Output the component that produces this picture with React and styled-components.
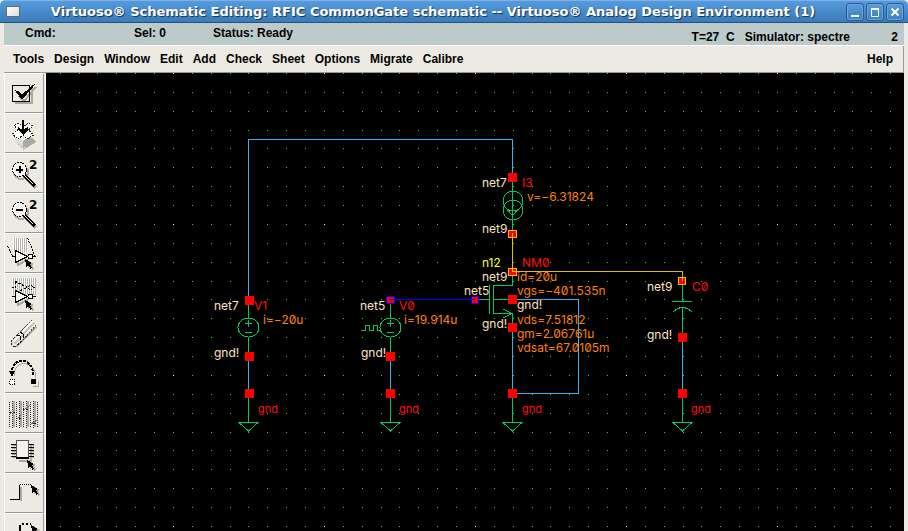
import React from "react";
import styled, { createGlobalStyle } from "styled-components";

const GlobalStyle = createGlobalStyle`
  * { box-sizing: border-box; }
  body { margin: 0; background: #edeae3; overflow: hidden; }
`;

const Window = styled.div`
  display: flex;
  flex-direction: column;
  height: 100vh;
  overflow: hidden;
  background: #edeae3;
  color: #000;
  font: bold 12px/16px "Liberation Sans", Arial, sans-serif;
`;

const TitleBar = styled.header`
  display: flex;
  align-items: center;
  flex: none;
  height: 23px;
  padding: 0 4px 0 6px;
  border-top: 1px solid #7db1e6;
  border-bottom: 1px solid #23507f;
  border-radius: 5px 5px 0 0;
  background: linear-gradient(#569bdd, #4387c7 60%, #3b7cba);
`;

const WindowMenu = styled.button`
  width: 14px;
  height: 11px;
  padding: 0;
  border: 1px solid #6d6a62;
  background: linear-gradient(135deg, #fff, #dcdcdc);
`;

const Title = styled.h1`
  flex: 1;
  margin: 0;
  overflow: hidden;
  color: #fff;
  font: bold 13px/20px "DejaVu Sans", sans-serif;
  text-align: center;
  text-shadow: 1px 1px 1px #1a3150;
  white-space: nowrap;
`;

const WindowControls = styled.div`
  display: flex;
  gap: 2px;
`;

const ControlButton = styled.button`
  display: flex;
  width: 18px;
  height: 18px;
  padding: 0;
  border: 1px solid #28598f;
  border-radius: 3px;
  background: linear-gradient(#5a9bdb, #3e80be);
  box-shadow: inset 0 0 0 1px #6ba5dd;
`;

const Frame = styled.div`
  display: flex;
  flex: 1;
  flex-direction: column;
  min-height: 0;
  padding: 0 4px;
`;

const StatusBar = styled.div`
  display: flex;
  flex: none;
  height: 23px;
  padding: 2px 6px 0 21px;
  border-bottom: 1px solid #fff;
  background: #bccaca;
`;

const StatusItem = styled.span`
  width: ${(p) => p.$width || "auto"};
  white-space: pre;
`;

const SimulatorInfo = styled.div`
  display: flex;
  gap: 10px;
  margin-left: auto;
  padding-top: 4px;
`;

const SessionNumber = styled.span`
  width: 38px;
  text-align: right;
`;

const MenuBar = styled.nav`
  display: flex;
  flex: none;
  align-items: center;
  gap: 10px;
  height: 27px;
  padding: 0 10px 0 9px;
  border-right: 1px solid #999;
  border-bottom: 1px solid #999;
`;

const MenuButton = styled.button`
  margin-left: ${(p) => (p.$end ? "auto" : "0")};
  padding: 0;
  border: 0;
  background: none;
  color: inherit;
  font: inherit;
`;

const Workspace = styled.main`
  display: flex;
  flex: 1;
  min-height: 0;
`;

const Toolbar = styled.div`
  display: flex;
  flex: none;
  flex-direction: column;
  width: 42px;
  padding-right: 1px;
  border-left: 1px solid #fff;
  border-right: 1px solid #fff;
  overflow: hidden;
`;

const ToolButton = styled.button`
  flex: none;
  height: 40px;
  padding: 0;
  border: 0;
  border-top: 1px solid #fff;
  border-bottom: 1px solid #999;
  border-right: 1px solid #999;
  background: #edeae3;

  svg { display: block; }
`;

const Canvas = styled.svg`
  display: block;
  flex: 1;
  min-width: 0;
  height: 100%;
  background: #000;
`;

const colors = {
  net: "#ffe4c0",
  value: "#ff8000",
  name: "#ff1010",
  node: "#ffff20",
};

const Label = styled.text`
  fill: ${(p) => colors[p.$kind]};
  font: 400 ${(p) => (p.$small ? 11 : 12)}px Inter, "DejaVu Sans", sans-serif;
  font-feature-settings: "zero";
`;

const SymbolLines = styled.g`
  fill: none;
  stroke: ${(p) => p.$color};
  stroke-width: 1;
`;

const shadow = "#aaa8a2";

function Cursor({ x, y }) {
  const d = "M0 0 L7 4 L4.5 5 L7 8.500 L5.500 9.500 L3 6 L1.500 8 Z";
  return (
    <g transform={`translate(${x} ${y})`}>
      <path d={d} fill={shadow} transform="translate(2 1)" />
      <path d={d} />
    </g>
  );
}

function Magnifier({ plus }) {
  return (
    <>
      <circle cx="16" cy="18" r="7" fill="none" stroke={shadow} strokeWidth="2" />
      <path d="M21 24 L31 34" stroke={shadow} strokeWidth="4" />
      <circle cx="14.500" cy="15.500" r="7" fill="#f5f3ef" stroke="#000" strokeDasharray="2 1" />
      <path d="M19.500 21.500 L30 32" stroke="#000" strokeWidth="3" />
      <path d="M19.500 21.500 L28.500 30.500" stroke="#eee" strokeWidth="1" />
      <path d={plus ? "M11 15.500 H18 M14.500 12 V19" : "M11 15.500 H18"} stroke="#000" strokeWidth="2" />
      <text x="24" y="15" fontFamily="DejaVu Sans" fontWeight="bold" fontSize="12">2</text>
    </>
  );
}

const stretchLines = (from, to, top, bottom) => {
  let d = "";
  for (let x = from; x <= to; x += 2) d += `M${x + 0.5} ${top}V${bottom}`;
  return d;
};

const pinRows = [10, 13, 16, 19, 22];

const tools = [
  ["Check and save", (
    <>
      <path d="M10 29 H27 V14 M14 22 L19 27 L31 13" fill="none" stroke={shadow} strokeWidth="2" />
      <path d="M7.500 11.500 H24.500 V27.500 H7.500 Z" fill="none" stroke="#000" />
      <path d="M11 17 L14 18 L17 21 L30 10 L17 25 Z" stroke="#000" />
    </>
  )],
  ["Save", (
    <>
      <path d="M18 36 L31 28 L27 23 Z" fill={shadow} />
      <path d="M10 22 L18 27 L26 22 V28 L18 34 L10 28 Z" fill="#aaa8a2" />
      <path d="M10 22 L18 27 V33 L10 28 Z" fill="#ddd" />
      <path d="M9.500 11.500 L14 9 L18 13 L23 9 L28 12 L23.500 16 L28.500 21 L22 25 L18 21 L13 25 L7.500 20 L12.500 16 Z" fill="#fff" stroke="#222" strokeDasharray="2 1" />
      <path d="M18 6 V17" stroke="#000" strokeWidth="2" />
      <path d="M13 13 L18 16 L23 13 V16 L18 21 L13 16 Z" />
    </>
  )],
  ["Zoom in by 2", <Magnifier plus />],
  ["Zoom out by 2", <Magnifier />],
  ["Stretch", (
    <>
      <path d={stretchLines(8, 22, 4, 18)} stroke="#fff" />
      <path d={stretchLines(9, 22, 4, 18)} stroke="#b4b2ad" />
      <path d="M2.500 12 L7.500 22 M22.500 4 L30 22" stroke="#000" strokeDasharray="2 1" />
      <path d="M12.500 18 V31 L24 25" fill="none" stroke={shadow} strokeWidth="2" />
      <path d="M10.500 16.500 V28.500 L22.500 22.500 Z M7 22.500 H10 M28 22.500 H31" fill="#f8f7f3" stroke="#000" />
      <circle cx="25.500" cy="22.500" r="2.500" fill="#fff" stroke="#000" />
      <Cursor x={20} y={25} />
    </>
  )],
  ["Copy", (
    <>
      <path d={stretchLines(7, 30, 4, 21)} stroke="#fff" />
      <path d={stretchLines(8, 30, 4, 21)} stroke="#b4b2ad" />
      <path d="M10.500 7.500 V18.500 L22.500 13.500 Z M7 13.500 H10 M28 13.500 H31" fill="none" stroke="#000" strokeDasharray="2 2" />
      <circle cx="25.500" cy="13.500" r="2.500" fill="none" stroke="#000" strokeDasharray="1 1" />
      <path d="M12.500 19 V31 L24 25" fill="none" stroke={shadow} strokeWidth="2" />
      <path d="M10.500 16.500 V28.500 L22.500 22.500 Z M7 22.500 H10 M28 22.500 H31" fill="#f8f7f3" stroke="#000" />
      <circle cx="25.500" cy="22.500" r="2.500" fill="#fff" stroke="#000" />
      <Cursor x={20} y={26} />
    </>
  )],
  ["Delete", (
    <>
      <path d="M11 33 L31 13" stroke={shadow} strokeWidth="2" />
      <path d="M8 29 L28 8" stroke="#c8c6c0" strokeWidth="5" />
      <path d="M8 28 L28 7" stroke="#fff" strokeWidth="2" />
      <path d="M13 20 L27 6 M18 26 L31 11" stroke="#444" strokeDasharray="2 1" />
      <path d="M13 20 L6 27 V30 L8 32 H11 L18 26" fill="none" stroke="#222" strokeDasharray="3 1" />
      <path d="M12 21 L15 22 L16 26 M15 18 L18 20 L18 24" fill="none" stroke="#000" />
    </>
  )],
  ["Undo", (
    <>
      <path d="M9 22 C9 4 31 6 31 24 M28 32 H33 V27" fill="none" stroke={shadow} strokeWidth="1" />
      <path d="M6.500 20 C7 2 28 2 28.500 22" fill="none" stroke="#000" strokeWidth="2" strokeDasharray="3 1" />
      <path d="M4 17 H10 L7 23 Z M26 25 H31 V30 H26 Z" />
      <path d="M4.500 25.500 H9.500 V30.500 H4.500 Z" fill="#fff" stroke="#000" strokeDasharray="1 1" />
    </>
  )],
  ["Property", (
    <>
      <path d="M9 7 V33 M16 7 V33 M23 7 V33 M30 7 V33" stroke="#aaa" strokeWidth="2" />
      <path d="M4.500 8 V33 M7.500 7 V34 M11.500 8 V33 M14.500 7 V34 M18.500 8 V33 M21.500 7 V34 M25.500 8 V33 M28.500 7 V34 M32.500 8 V33" stroke="#222" strokeDasharray="1 1" />
      <path d="M5 18 H10 M11 24 H17 M18 15 H24 M26 29 H32" stroke="#111" strokeWidth="1" strokeDasharray="2 1" />
      <path d="M5 20 L10 15 M12 25 L17 20 M19 16 L25 11 M26 30 L32 26" stroke="#777" />
    </>
  )],
  ["Component", (
    <>
      <path d="M14 26.500 H26 V10" fill="none" stroke={shadow} strokeWidth="2" />
      {pinRows.map((y) => (
        <path key={y} d={`M6 ${y}.500 H12 M24 ${y}.500 H29`} stroke="#000" />
      ))}
      {pinRows.map((y) => (
        <path key={`s${y}`} d={`M7 ${y + 1}.500 H11 M25 ${y + 1}.500 H29`} stroke={shadow} />
      ))}
      <path d="M11.500 6.500 H23.500 V24.500 H11.500 Z" fill="#f4f3ef" stroke="#555" />
      <path d="M11 24 H24" stroke="#000" strokeWidth="2" />
      <Cursor x={22} y={26} />
    </>
  )],
  ["Wire (narrow)", (
    <>
      <path d="M16 27 V13" stroke={shadow} strokeWidth="2" />
      <path d="M5 25.500 H14.500 V11" fill="none" stroke="#000" />
      <path d="M15 10.500 H26" stroke="#000" strokeDasharray="1 1" />
      <Cursor x={26} y={11} />
    </>
  )],
  ["Wire (wide)", (
    <>
      <path d="M5 26 H15 V11" fill="none" stroke="#000" strokeWidth="2" />
      <path d="M17 10 H26" stroke="#000" strokeWidth="2" strokeDasharray="2 2" />
      <Cursor x={26} y={11} />
    </>
  )],
];

const menus = ["Tools", "Design", "Window", "Edit", "Add", "Check", "Sheet", "Options", "Migrate", "Calibre"];

const labels = [
  ["net", 482, 187, "net7"],
  ["name", 522, 187, "I3"],
  ["value", 527, 201, "v=\u22126.31824"],
  ["net", 482, 233, "net9"],
  ["node", 482, 267, "n12"],
  ["name", 522, 267, "NM0"],
  ["net", 482, 281, "net9"],
  ["value", 517, 281, "id=20u"],
  ["net", 464, 295, "net5"],
  ["value", 517, 295, "vgs=\u2212401.535n"],
  ["net", 517, 309, "gnd!"],
  ["value", 517, 324, "vds=7.51812"],
  ["net", 482, 328, "gnd!"],
  ["value", 517, 338, "gm=2.06761u"],
  ["value", 517, 352, "vdsat=67.0105m"],
  ["net", 214, 310, "net7"],
  ["name", 254, 310, "V1"],
  ["value", 263, 324, "i=\u221220u"],
  ["net", 214, 357, "gnd!"],
  ["net", 360, 310, "net5"],
  ["name", 399, 310, "V0"],
  ["value", 404, 324, "i=19.914u"],
  ["net", 361, 357, "gnd!"],
  ["net", 647, 291, "net9"],
  ["name", 692, 291, "C0"],
  ["net", 647, 339, "gnd!"],
];

const grounds = [[248, 258], [390, 399], [512, 522], [682, 691]];

const pins = [
  [249, 300], [249, 356], [249, 393],
  [390, 356], [390, 393],
  [512, 177], [512, 299], [512, 327], [512, 393],
  [682, 337], [682, 393],
];

const gridSteps = [0, 19, 38, 57, 75, 94, 113, 132];

function Source({ x }) {
  return (
    <path
      d={`M${x}.500 304 V318 M${x}.500 337 V352 M${x - 3} 323.500 H${x + 4} M${x}.500 320 V327 M${x - 3} 332.500 H${x + 4}
        M${x - 10} 327.500 a10.500 9.500 0 1 0 21 0 a10.500 9.500 0 1 0 -21 0`}
    />
  );
}

function Schematic() {
  return (
    <Canvas role="img" aria-label="CommonGate schematic">
      <defs>
        <pattern id="grid" x="22" y="73" width="151" height="151" patternUnits="userSpaceOnUse">
          {gridSteps.map((y) =>
            gridSteps.map((x) => (
              <rect key={`${x}-${y}`} x={x} y={y} width="1" height="1" fill={x + y === 0 ? "#fff" : "#00ff00"} shapeRendering="crispEdges" />
            ))
          )}
        </pattern>
      </defs>
      <g transform="translate(-46 -73)">
        <rect x="46" y="73" width="100%" height="100%" fill="url(#grid)" />
        <g shapeRendering="crispEdges">
          <SymbolLines $color="#38b0f8">
            <path d="M248.500 300 V139.500 H512.500 V177 M248.500 360 V390 M390.500 360 V390 M682.500 341 V390 M512.500 331 V390 M516 299.500 H578.500 V393.500 H516" />
          </SymbolLines>
          <SymbolLines $color="#0000ff">
            <path d="M390 299.500 H475" />
          </SymbolLines>
          <SymbolLines $color="#00c864">
            <Source x={248} />
            <Source x={390} />
            <path d="M361 330.500 H365.500 V325.500 H369.500 V330.500 H373.500 V325.500 H377.500 V330.500 H380" />
            <path d="M512.500 181 V230 M503 201 a10 10 0 1 0 20 0 a10 10 0 1 0 -20 0 M503 210 a10 10 0 1 0 20 0 a10 10 0 1 0 -20 0 M508 210.500 H517 L512.500 215.500 Z" />
            <path d="M512.500 275 V285.500 H493.500 V313.500 H512.500 V325 M489.500 285 V314 M477 299.500 H489 M494 299.500 H508 M503 309 L512 313.500 L503 318" />
            <path d="M682.500 285 V301.500 M672 301.500 H692 M673 312 Q682.500 303 692 312 M682.500 308 V334" />
            {grounds.map(([x]) => (
              <path key={x} d={`M${x}.500 397 V422.500 M${x - 9} 422.500 H${x + 10} L${x}.500 431 Z`} />
            ))}
          </SymbolLines>
          <g fill="#f00">
            {pins.map(([x, y]) => (
              <rect key={`${x}-${y}`} x={x - 4} y={y - 4} width="9" height="9" />
            ))}
          </g>
          <g fill="#f00" stroke="#e0c000">
            <path d="M508.500 230.500 H516.500 V237.500 H508.500 Z M508.500 268.500 H516.500 V275.500 H508.500 Z M678.500 277.500 H685.500 V284.500 H678.500 Z" />
          </g>
          <SymbolLines $color="#e0c000">
            <path d="M512.500 233 V271.500 H682.500 V281" />
          </SymbolLines>
          <path d="M386.500 296.500 H394.500 V303.500 H386.500 Z M471.500 296.500 H478.500 V303.500 H471.500 Z" fill="#f00" stroke="#0000ff" />
          <path d="M390 299.500 H394 M471 299.500 H475" stroke="#0000ff" />
        </g>
        {labels.map(([kind, x, y, text]) => (
          <Label key={`${x}-${y}`} $kind={kind} x={x} y={y}>{text}</Label>
        ))}
        {grounds.map(([x, labelX]) => (
          <Label key={x} $kind="name" $small x={labelX} y="413">gnd</Label>
        ))}
      </g>
    </Canvas>
  );
}

export default function App() {
  return (
    <Window>
      <GlobalStyle />
      <TitleBar>
        <WindowMenu aria-label="Window menu" />
        <Title>Virtuoso® Schematic Editing: RFIC CommonGate schematic -- Virtuoso® Analog Design Environment (1)</Title>
        <WindowControls>
          <ControlButton aria-label="Minimize">
            <svg width="16" height="16"><path d="M4 12 H12" stroke="#fff" strokeWidth="2" /></svg>
          </ControlButton>
          <ControlButton aria-label="Maximize">
            <svg width="16" height="16"><path d="M4.500 5 V12.500 H11.500 V5" fill="none" stroke="#fff" /><path d="M4 5 H12" stroke="#fff" strokeWidth="2" /></svg>
          </ControlButton>
          <ControlButton aria-label="Close">
            <svg width="16" height="16"><path d="M4.500 4.500 L11.500 11.500 M11.500 4.500 L4.500 11.500" stroke="#fff" strokeWidth="2" /></svg>
          </ControlButton>
        </WindowControls>
      </TitleBar>
      <Frame>
        <StatusBar>
          <StatusItem $width="109px">Cmd:</StatusItem>
          <StatusItem $width="79px">Sel: 0</StatusItem>
          <StatusItem>Status: Ready</StatusItem>
          <SimulatorInfo>
            <StatusItem>T=27  C</StatusItem>
            <StatusItem>Simulator: spectre</StatusItem>
            <SessionNumber>2</SessionNumber>
          </SimulatorInfo>
        </StatusBar>
        <MenuBar>
          {menus.map((name) => <MenuButton key={name}>{name}</MenuButton>)}
          <MenuButton $end>Help</MenuButton>
        </MenuBar>
        <Workspace>
          <Toolbar role="toolbar" aria-label="Schematic tools">
            {tools.map(([name, icon]) => (
              <ToolButton key={name} aria-label={name}>
                <svg width="38" height="38" shapeRendering="crispEdges">{icon}</svg>
              </ToolButton>
            ))}
          </Toolbar>
          <Schematic />
        </Workspace>
      </Frame>
    </Window>
  );
}
